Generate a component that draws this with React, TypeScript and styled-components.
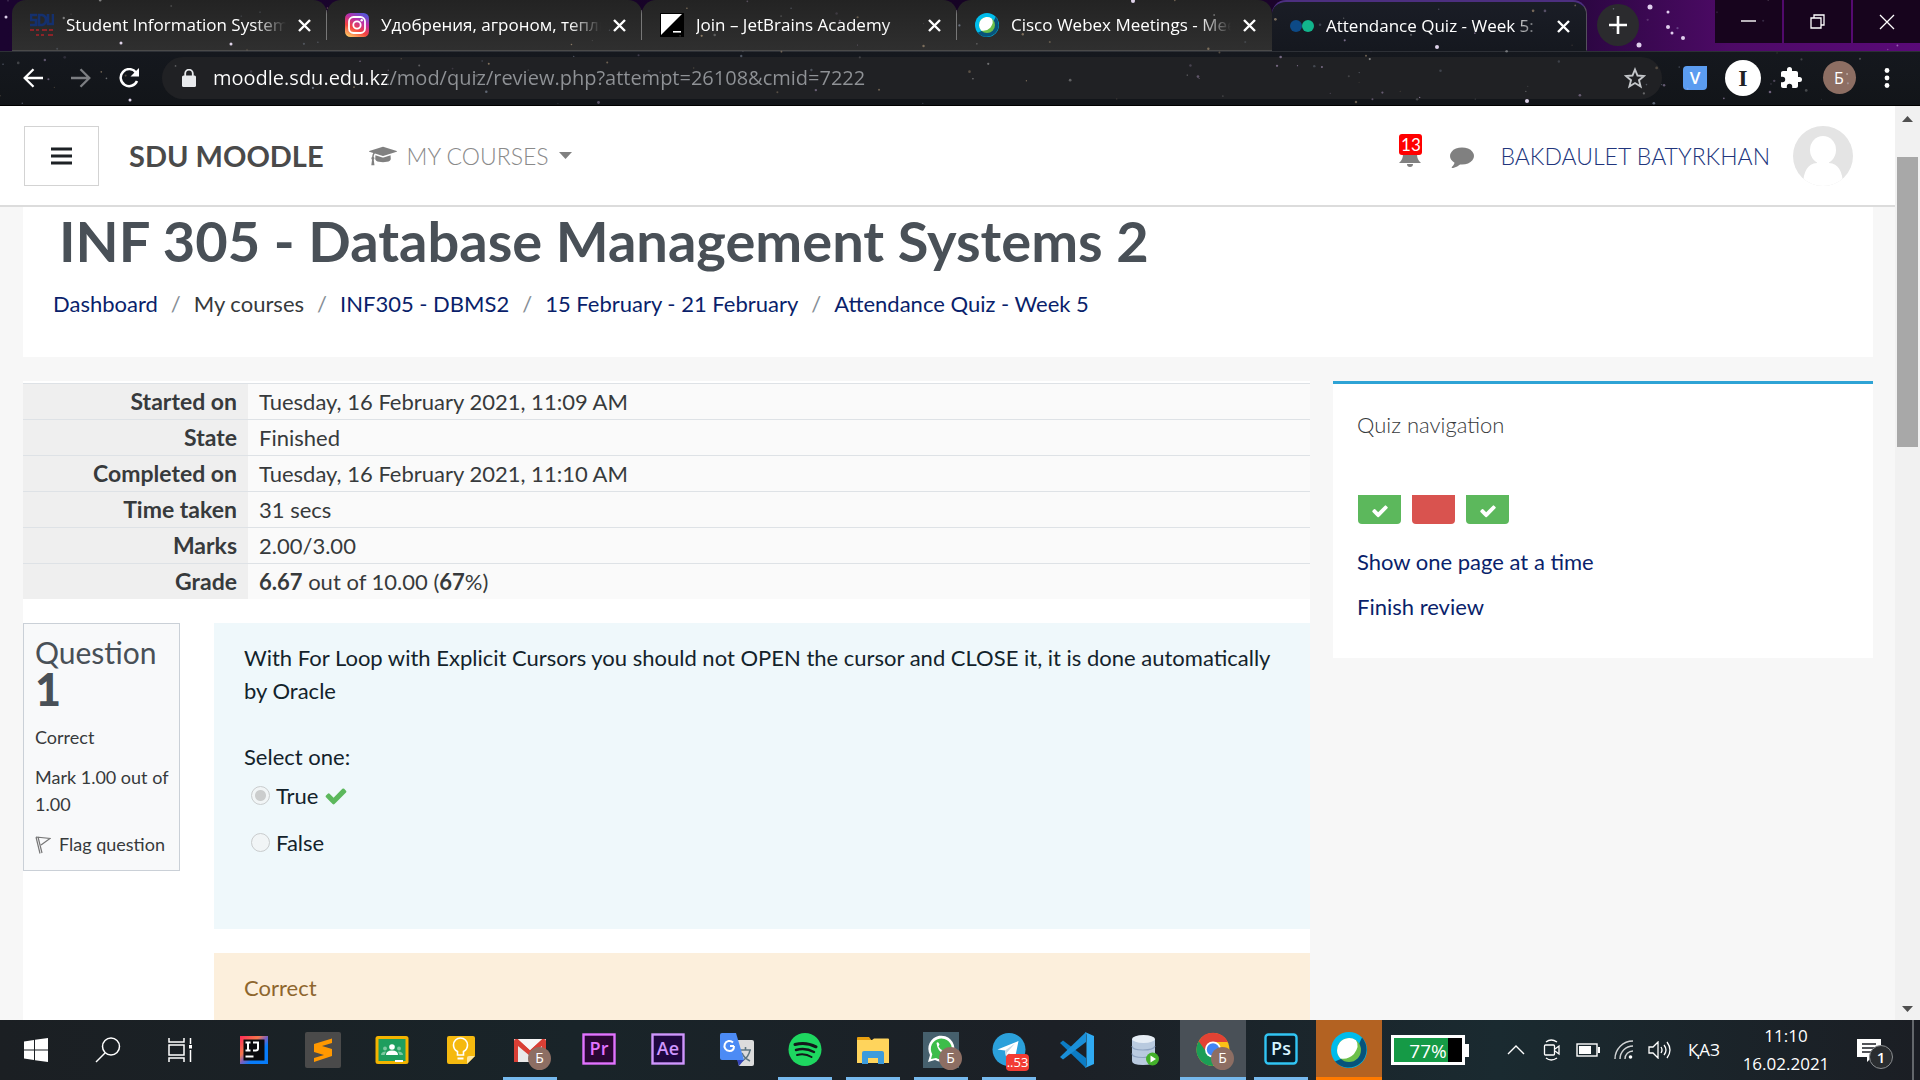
import React from "react";
import styled, { createGlobalStyle, css } from "styled-components";

const ui = `"Open Sans", "Noto Sans", sans-serif`;
const lato = `Lato, "Open Sans", sans-serif`;

const GlobalStyle = createGlobalStyle`
  *, *::before, *::after { box-sizing: border-box; }
  body { margin: 0; background: #f7f7f7; font-family: ${lato}; overflow: hidden; }
  button { margin: 0; padding: 0; border: 0; background: none; color: inherit; font: inherit; cursor: pointer; }
  a { text-decoration: none; color: #0a1f6b; }
  h1, h2, h3, p, ol, ul, fieldset, legend { margin: 0; padding: 0; border: 0; font-weight: 400; }
  ol, ul { list-style: none; }
  svg { display: block; flex: none; }
`;

const Screen = styled.div`
  display: flex;
  flex-direction: column;
  height: 100vh;
`;

/* ---------- browser frame ---------- */

const Frame = styled.header`
  position: relative;
  height: 106px;
  flex: none;
  background: linear-gradient(90deg, #1b0430 0%, #150322 60%, #2a0640 82%, #4d0a66 90%, #5a0a78 100%);
  color: #fff;
  font-family: ${ui};
  border-bottom: 1px solid #000;
`;

const Stars = styled.svg`
  position: absolute;
  inset: 0;
  width: 100%;
  height: 100%;
  pointer-events: none;
`;

const TabStrip = styled.div`
  display: flex;
  height: 51px;
  padding-left: 12px;
`;

const TabItem = styled.div<{ $active?: boolean; $divider?: boolean }>`
  display: flex;
  align-items: center;
  gap: 12px;
  flex: 0 1 315px;
  min-width: 0;
  padding: 0 16px 0 18px;
  border-radius: 14px 14px 0 0;
  background: ${(p) => (p.$active ? "linear-gradient(#1a1d26, #15181f)" : "linear-gradient(180deg, #232323, #2f2f2f)")};
  border-bottom: 1px solid ${(p) => (p.$active ? "#15181f" : "#4a4a4a")};
  ${(p) => p.$active && css`border-top: 2px solid #4c2f80; border-right: 1px solid #55505c;`}
  ${(p) => p.$divider && css`background: linear-gradient(#777, #777) right center / 1px 30px no-repeat, linear-gradient(180deg, #232323, #2f2f2f);`}
`;

const TabTitle = styled.span`
  flex: 1;
  min-width: 0;
  overflow: hidden;
  white-space: nowrap;
  font-size: 17px;
  line-height: 24px;
  mask-image: linear-gradient(90deg, #000 calc(100% - 32px), transparent);
`;

const NewTab = styled.button`
  display: grid;
  place-items: center;
  width: 42px;
  height: 42px;
  margin: 4px 0 0 10px;
  border-radius: 50%;
  background: #2b2b2e;
`;

const WindowButtons = styled.div`
  display: flex;
  gap: 2px;
  margin-left: auto;
`;

const WindowButton = styled.button`
  display: grid;
  place-items: center;
  width: 67px;
  height: 43px;
  background: #17041d;
`;

const Toolbar = styled.div`
  display: flex;
  align-items: center;
  height: 54px;
  padding: 0 9px 2px 16px;
  background: linear-gradient(#15181e, #121519);
  border-top: 1px solid #2d3036;
`;

const NavButton = styled.button`
  display: grid;
  place-items: center;
  width: 34px;
  height: 34px;
  margin-right: 14px;
`;

const Omnibox = styled.label`
  display: flex;
  align-items: center;
  flex: 1;
  height: 42px;
  margin: 0 9px 0 2px;
  padding: 0 16px 0 20px;
  border-radius: 21px;
  background: #202124;
`;

const Address = styled.input`
  flex: 1;
  min-width: 0;
  margin-left: 17px;
  padding: 0;
  border: 0;
  outline: 0;
  font: 20px/30px ${ui};
  color: #9aa0a6;
  background: linear-gradient(90deg, #fff 174px, #8f9296 174px);
  background-clip: text;
  -webkit-background-clip: text;
  -webkit-text-fill-color: transparent;
`;

const Extensions = styled.div`
  display: grid;
  grid-auto-flow: column;
  grid-auto-columns: 48px;
  place-items: center;
`;

const Round = styled.button<{ $size: number; $bg: string; $fg: string }>`
  display: grid;
  place-items: center;
  width: ${(p) => p.$size}px;
  height: ${(p) => p.$size}px;
  border-radius: 50%;
  background: ${(p) => p.$bg};
  color: ${(p) => p.$fg};
  font-size: 16px;
`;

const Serif = styled.b`
  font: 700 24px/30px "Liberation Serif", serif;
`;

const VBadge = styled.button`
  width: 24px;
  height: 24px;
  border-radius: 4px 0 4px 4px;
  background: #5b9cf0;
  font: 600 17px/24px ${ui};
  color: #fff;
`;

/* ---------- page ---------- */

const Viewport = styled.div`
  display: flex;
  flex: 1;
  min-height: 0;
`;

const Page = styled.div`
  flex: 1;
  min-width: 0;
  overflow: hidden;
  color: #373a3c;
`;

const Navbar = styled.nav`
  display: flex;
  align-items: center;
  height: 101px;
  padding: 0 42px 0 24px;
  background: #fff;
  border-bottom: 2px solid #dcdcdc;
`;

const Burger = styled.button`
  display: grid;
  place-items: center;
  width: 75px;
  height: 60px;
  border: 1px solid #d3d3d3;
  color: #1d2125;
`;

const Brand = styled.a`
  margin-left: 30px;
  font-size: 29px;
  line-height: 40px;
  font-weight: 700;
  color: #4a4a4a;
`;

const CoursesMenu = styled.button`
  display: flex;
  align-items: center;
  margin-left: 45px;
  gap: 10px;
  font-size: 23px;
  line-height: 34px;
  font-weight: 300;
  color: #8a8a8a;
`;

const UserArea = styled.div`
  display: flex;
  align-items: center;
  margin-left: auto;
`;

const BellButton = styled.button`
  position: relative;
  margin-right: 28px;
  color: #808080;
`;

const BellCount = styled.span`
  position: absolute;
  left: 1px;
  top: -10px;
  width: 23px;
  height: 21px;
  border-radius: 3px;
  background: #f00;
  color: #fff;
  font-size: 17px;
  line-height: 21px;
  text-align: center;
`;

const UserName = styled.a`
  margin: 0 23px 0 26px;
  font-size: 23px;
  line-height: 34px;
  font-weight: 300;
  color: #21357c;
`;

const PageHead = styled.section`
  margin: 0 22px 24px 23px;
  padding: 1px 30px 36px;
  background: #fff;
`;

const CourseTitle = styled.h1`
  padding-left: 6px;
  font-size: 56px;
  line-height: 66px;
  font-weight: 700;
  color: #495057;
`;

const Crumbs = styled.ol`
  display: flex;
  margin-top: 13px;
  font-size: 22px;
  line-height: 34px;
`;

const Crumb = styled.li`
  & + &::before {
    content: "/";
    padding: 0 13px;
    color: #868e96;
  }
`;

const Columns = styled.div`
  display: flex;
  align-items: flex-start;
  gap: 23px;
  margin: 0 22px 0 23px;
`;

const Attempt = styled.main`
  flex: 1;
  min-width: 0;
  min-height: 640px;
  padding-top: 2px;
  background: #fff;
`;

const Summary = styled.table`
  width: 100%;
  border-collapse: collapse;
  font-size: 22px;
  line-height: 35px;

  th, td {
    padding: 0 11px;
    border-top: 1px solid #dee2e6;
  }
  th {
    width: 225px;
    text-align: right;
    font-size: 23px;
    font-weight: 700;
    background: #efefef;
  }
  td { background: #fafafa; }
`;

const Question = styled.section`
  display: flex;
  align-items: flex-start;
  gap: 34px;
  margin-top: 24px;
`;

const Info = styled.aside`
  display: flex;
  flex-direction: column;
  gap: 13px;
  width: 157px;
  flex: none;
  padding: 10px 0 12px 11px;
  border: 1px solid #cad0d7;
  background: #f8f9fa;
  font-size: 18px;
  line-height: 27px;
`;

const QuestionNumber = styled.h3`
  margin-bottom: 3px;
  font-size: 30px;
  line-height: 36px;
  color: #495057;

  b {
    display: block;
    font-size: 45px;
    line-height: 38px;
    font-weight: 900;
  }
`;

const FlagLink = styled.a`
  display: flex;
  align-items: center;
  gap: 8px;
  color: #373a3c;
`;

const Body = styled.div`
  flex: 1;
  min-width: 0;
  font-size: 22px;
  line-height: 33px;
`;

const Formulation = styled.div`
  padding: 18px 24px 56px 30px;
  background: #eff8fb;
  color: #13232b;
`;

const Choices = styled.fieldset`
  margin-top: 33px;
`;

const Choice = styled.label`
  display: flex;
  align-items: center;
  margin: 6px 0 14px 7px;
`;

const Radio = styled.input`
  appearance: none;
  width: 19px;
  height: 19px;
  margin: 0 6px 0 0;
  border: 1px solid #c9cccd;
  border-radius: 50%;
  background: #f1f5f6;

  &:checked {
    background: radial-gradient(circle, #cbcdcd 0 5px, #f1f5f6 6px);
  }
`;

const Outcome = styled.div`
  margin-top: 24px;
  padding: 18px 30px;
  background: #fcefdc;
  color: #8e662e;
`;

const NavBlock = styled.aside`
  width: 540px;
  flex: none;
  padding: 24px 24px 35px;
  border-top: 3px solid #2ea3d5;
  background: #fff;
  font-size: 22px;
  line-height: 33px;
`;

const BlockTitle = styled.h2`
  font-size: 22px;
  font-weight: 300;
`;

const Cells = styled.div`
  display: flex;
  gap: 11px;
  margin: 54px 0 21px 1px;
`;

const Cell = styled.a<{ $tone: "ok" | "bad" }>`
  display: grid;
  place-items: center;
  width: 43px;
  height: 29px;
  padding-top: 3px;
  border-radius: 0 0 4px 4px;
  color: #fff;
  background: ${(p) => (p.$tone === "ok" ? "#5cb85c" : "#d9534f")};
`;

const BlockLink = styled.a`
  display: block;
  margin-top: 12px;
`;

const ScrollTrack = styled.div`
  display: flex;
  flex-direction: column;
  align-items: center;
  width: 25px;
  flex: none;
  padding: 10px 0 8px;
  background: #f1f1f1;
`;

const Thumb = styled.div`
  width: 21px;
  height: 290px;
  margin: 35px 0 auto;
  background: #a8a8a8;
`;

/* ---------- taskbar ---------- */

const Taskbar = styled.footer`
  display: flex;
  align-items: stretch;
  height: 60px;
  flex: none;
  background: linear-gradient(90deg, #1b1f23 0%, #192429 30%, #1c2026 55%, #1a2a30 78%, #1b1e24 100%);
  color: #fff;
  font-family: ${ui};
`;

const SystemButton = styled.button`
  display: grid;
  place-items: center;
  width: 72px;
`;

const TaskGroup = styled.div<{ $gap: number; $lead: number }>`
  display: flex;
  gap: ${(p) => p.$gap}px;
  margin-left: ${(p) => p.$lead}px;
`;

const TaskButton = styled.button<{ $state?: "open" | "active" | "alert" }>`
  display: grid;
  place-items: center;
  width: 66px;
  ${(p) => p.$state === "open" && css`background: linear-gradient(#76b9ed, #76b9ed) center bottom / 54px 3px no-repeat;`}
  ${(p) => p.$state === "active" && css`background: #495057; box-shadow: inset 0 -3px #76b9ed;`}
  ${(p) => p.$state === "alert" && css`background: #b36222; box-shadow: inset 0 -3px #ff7a00;`}
`;

const IconBox = styled.span`
  position: relative;
  display: block;
  width: 36px;
  height: 36px;
`;

const ProfileDot = styled.span`
  position: absolute;
  left: 16px;
  top: 15px;
  width: 23px;
  height: 23px;
  border-radius: 50%;
  background: #8d6e63;
  font-size: 14px;
  line-height: 22px;
  text-align: center;
`;

const CountDot = styled.span`
  position: absolute;
  left: 15px;
  top: 22px;
  width: 23px;
  height: 17px;
  border-radius: 4px;
  background: #f23c34;
  font-size: 13px;
  line-height: 17px;
  text-align: center;
`;

const Battery = styled.div`
  display: flex;
  align-items: center;
  align-self: center;
  margin-left: 9px;

  &::after {
    content: "";
    width: 4px;
    height: 13px;
    background: #fff;
  }
`;

const BatteryLevel = styled.div`
  width: 74px;
  height: 30px;
  border: 3px solid #fff;
  background: linear-gradient(90deg, #159a46 54px, #000 54px);
  font-size: 19px;
  line-height: 26px;
  text-align: center;
`;

const Tray = styled.div`
  display: flex;
  align-items: center;
  margin-left: auto;
  font-size: 17px;
  line-height: 28px;
`;

const TrayButton = styled.button`
  display: grid;
  place-items: center;
  width: 36px;
  height: 60px;
`;

const Language = styled.button`
  width: 34px;
  margin: 0 21px 0 9px;
`;

const Clock = styled.button`
  width: 88px;
  line-height: 28px;
`;

const Notices = styled.button`
  position: relative;
  width: 36px;
  height: 36px;
  margin: 0 20px 0 26px;
`;

const NoticeCount = styled.span`
  position: absolute;
  left: 13px;
  top: 13px;
  width: 24px;
  height: 24px;
  border: 1px solid #8a8d90;
  border-radius: 50%;
  background: #2a2d30;
  font-size: 15px;
  font-weight: 600;
  line-height: 22px;
  text-align: center;
`;

const ShowDesktop = styled.button`
  width: 8px;
  height: 60px;
  border-left: 2px solid #63676b;
`;

/* ---------- drawings ---------- */

const starData = (() => {
  let s = 7;
  const next = () => (s = (s * 16807) % 2147483647) / 2147483647;
  return Array.from({ length: 160 }, () => ({
    x: next() * 1920,
    y: next() * 104,
    r: 0.5 + next() * 0.9,
    o: 0.12 + next() * 0.35,
    c: ["#fff", "#cfe0ff", "#ffd9a8", "#e8c8ff"][Math.floor(next() * 4)],
  }));
})();

const bigStars = [
  [1650, 7, 2.5], [1668, 27, 2], [1639, 45, 2.5], [1683, 38, 2], [1668, 12, 1.5], [1672, 33, 1.5],
  [1437, 47, 2], [1527, 101, 2], [1133, 1, 2], [121, 43, 1.5], [231, 44, 1.5], [6, 17, 1.5], [130, 100, 1.5],
];

const Starfield = () => (
  <Stars aria-hidden viewBox="0 0 1920 106" preserveAspectRatio="xMinYMin slice">
    {starData.map((d, i) => <circle key={i} cx={d.x} cy={d.y} r={d.r} fill={d.c} opacity={d.o} />)}
    {bigStars.map(([x, y, r], i) => <circle key={i} cx={x} cy={y} r={r} fill="#f3e6ff" opacity=".9" />)}
  </Stars>
);

const Cross = () => (
  <svg width="13" height="13" viewBox="0 0 13 13"><path d="M1 1l11 11M12 1L1 12" stroke="#fff" strokeWidth="2.4" /></svg>
);

const Check = ({ size, color = "currentColor" }: { size: number; color?: string }) => (
  <svg width={size} height={size} viewBox="0 0 1792 1792" fill={color}><path d="M1671 566q0 40-28 68l-724 724-136 136q-28 28-68 28t-68-28l-136-136-362-362q-28-28-28-68t28-68l136-136q28-28 68-28t68 28l294 295 656-657q28-28 68-28t68 28l136 136q28 28 28 68z" /></svg>
);

const Webex = ({ size }: { size: number }) => (
  <svg width={size} height={size} viewBox="0 0 36 36">
    <circle cx="18" cy="18" r="18" fill="#00bceb" />
    <path d="M31 5.500A18 18 0 1 1 4 29.500L12 26Q26 30 28 12Z" fill="#07537b" />
    <circle cx="18" cy="18" r="12" fill="#6cc04a" />
    <path d="M25 8.300Q29 14 23 22Q17 28 9.500 26.500A12 12 0 0 1 25 8.300Z" fill="#fff" />
  </svg>
);

const favicons = {
  sdu: (
    <svg width="24" height="24" viewBox="0 0 24 24">
      <g fill="none" stroke="#14306e" strokeWidth="2.600"><path d="M7 2H1v5h5v5H0M9 2v10h3q4-1 4-5t-4-5zM18 1v10h5V1" /></g>
      <path d="M0 17h4M6 17h3M12 17h5M19 17h4M6 22h3M11 22h3M18 22h5" stroke="#8c2328" strokeWidth="2" />
    </svg>
  ),
  instagram: (
    <svg width="24" height="24" viewBox="0 0 24 24">
      <defs><linearGradient id="ig" x1="0.2" y1="1" x2="0.7" y2="0"><stop offset="0" stopColor="#fec564" /><stop offset=".35" stopColor="#f5433f" /><stop offset=".7" stopColor="#b92fa8" /><stop offset="1" stopColor="#5a55d8" /></linearGradient></defs>
      <rect width="24" height="24" rx="5.500" fill="url(#ig)" />
      <g fill="none" stroke="#fff" strokeWidth="1.800"><rect x="4" y="4" width="16" height="16" rx="4.500" /><circle cx="12" cy="12" r="3.700" /></g>
      <circle cx="16.700" cy="7.300" r="1.200" fill="#fff" />
    </svg>
  ),
  jetbrains: (
    <svg width="24" height="24" viewBox="0 0 24 24"><path d="M0 0h24v24H0z" /><path d="M1 1h21L1 22z" fill="#fff" /><path d="M13 18h8v1.600h-8z" fill="#fff" /></svg>
  ),
  webex: <Webex size={24} />,
  moodle: (
    <svg width="24" height="24" viewBox="0 0 24 24"><circle cx="6" cy="12" r="6" fill="#0d4a86" /><circle cx="18" cy="12" r="6" fill="#12b48c" /></svg>
  ),
};

const Adobe = ({ label, line, fill, ink = line, radius = 0 }: { label: string; line: string; fill: string; ink?: string; radius?: number }) => (
  <svg width="36" height="36" viewBox="0 0 36 36">
    <rect x="2.500" y="2.500" width="31" height="29" rx={radius} fill={fill} stroke={line} strokeWidth="2.400" />
    <text x="18" y="23" textAnchor="middle" fontFamily="Open Sans, sans-serif" fontWeight="600" fontSize="18" fill={ink}>{label}</text>
  </svg>
);

type Task = { name: string; icon: React.ReactNode; state?: "open" | "active" | "alert"; profile?: boolean; count?: string };

const launchers: Task[] = [
  { name: "IntelliJ IDEA", icon: (
    <svg viewBox="0 0 36 36"><defs><linearGradient id="ij" x1="0" y1="0" x2="1" y2="1"><stop offset="0" stopColor="#fe2857" /><stop offset=".35" stopColor="#f5784c" /><stop offset=".5" stopColor="#7b5fc0" /><stop offset=".65" stopColor="#087cfa" /><stop offset="1" stopColor="#087cfa" /></linearGradient></defs>
      <rect x="4" y="4" width="28" height="28" fill="url(#ij)" /><rect x="7.500" y="7.500" width="21" height="21" fill="#0b0b0d" />
      <path d="M9.500 10.500h5M12 10.500v8M9.500 18.500h5M17 10.500h5v6q0 2-2.200 2H17" fill="none" stroke="#fff" strokeWidth="2" /><path d="M9.500 24.500h8" stroke="#fff" strokeWidth="2" /></svg>
  ) },
  { name: "Sublime Text", icon: (
    <svg viewBox="0 0 36 36"><rect width="36" height="36" rx="2" fill="#4a4a4a" /><path d="M27 6.500L9 12v8l10 3L9 26v4l18-6v-7l-10-3 10-3z" fill="#ff9800" /></svg>
  ) },
  { name: "Google Classroom", icon: (
    <svg viewBox="0 0 36 36"><rect x="1.500" y="4" width="33" height="28" rx="2.500" fill="#f4b400" /><rect x="4.500" y="7" width="27" height="22" fill="#1e9e5e" />
      <circle cx="18" cy="15" r="2.800" fill="#fff" /><path d="M12 23q0-4.500 6-4.500t6 4.500z" fill="#fff" /><g fill="#7cc9a0"><circle cx="11" cy="16.500" r="1.900" /><circle cx="25" cy="16.500" r="1.900" /><path d="M7 23q0-3.500 5-3.500l-1.500 3.500zM29 23q0-3.500-5-3.500l1.500 3.500z" /></g><path d="M21 28h8v2h-8z" fill="#fff" /></svg>
  ) },
  { name: "Google Keep", icon: (
    <svg viewBox="0 0 36 36"><path d="M6 4h24q2 0 2 2v18l-8 8H6q-2 0-2-2V6q0-2 2-2z" fill="#f5b90f" /><path d="M32 24h-6q-2 0-2 2v6z" fill="#ffe7a0" />
      <path d="M14.500 23v-3.500q-4-2-4-6.500a7 7 0 0 1 14 0q0 4.500-4 6.500V23z" fill="none" stroke="#fff" strokeWidth="1.600" /><path d="M14.500 26.500h6" stroke="#fff" strokeWidth="2" /></svg>
  ) },
  { name: "Gmail", state: "open", profile: true, icon: (
    <svg viewBox="0 0 36 36"><path d="M2 7h32v23H2z" fill="#e9e9e9" /><path d="M2 9q0-2 2-2h2l12 11L30 7h2q2 0 2 2v21h-4V14L18 24 6 14v16H2z" fill="#d93f35" /><path d="M6 7h24L18 18z" fill="#f7f7f7" /></svg>
  ) },
  { name: "Premiere Pro", icon: <Adobe label="Pr" line="#e273ff" fill="#2a0634" /> },
  { name: "After Effects", icon: <Adobe label="Ae" line="#cf96fd" fill="#1f0740" /> },
  { name: "Google Translate", icon: (
    <svg viewBox="0 0 36 36"><path d="M14 8h19q2 0 2 2v22q0 2-2 2H20z" fill="#dcdcdc" /><path d="M21 18h11M26.500 15v3M23 29q7-4 8-11M23 21q2 5 8 8" fill="none" stroke="#5d7580" strokeWidth="1.600" /><path d="M18 28h7l-5 6z" fill="#3545b8" /><path d="M3 1h14l8 27H3q-2 0-2-2V3q0-2 2-2z" fill="#4c8bf5" />
      <path d="M15 14h-4M15 14q0 5-4.500 5a5 5 0 1 1 3.500-8.500" fill="none" stroke="#fff" strokeWidth="2" /></svg>
  ) },
];

const running: Task[] = [
  { name: "Spotify", state: "open", icon: (
    <svg viewBox="0 0 36 36"><circle cx="18" cy="17.500" r="16.500" fill="#1ed760" /><g fill="none" stroke="#13181b" strokeLinecap="round"><path d="M8 12.500q11-3 21 2.300" strokeWidth="3" /><path d="M9 18q9.500-2.500 18 2" strokeWidth="2.500" /><path d="M10 23q8-2 14.500 2" strokeWidth="2" /></g></svg>
  ) },
  { name: "File Explorer", state: "open", icon: (
    <svg viewBox="0 0 36 36"><path d="M2 6q0-1 1-1h11l3 4h-15z" fill="#e8a010" /><path d="M2 8h15l2-1.500h14q1 0 1 1V31H2z" fill="#ffd45c" /><path d="M7 32V21q0-2 2-2h18q2 0 2 2v11h-6v-6H13v6z" fill="#3c9bdc" /></svg>
  ) },
  { name: "WhatsApp", state: "open", profile: true, icon: (
    <svg viewBox="0 0 36 36"><path d="M0 0h36v36H0z" fill="#46606d" /><path d="M5 30l2-7A13 13 0 1 1 12 28z" fill="#fff" /><path d="M8 27l1.300-4.700A10.500 10.500 0 1 1 13 26z" fill="#3dbd4a" /><path d="M13.500 11q1.500-2 3 1.500l-1 2q2 3.500 5 4.500l1.500-2 3.500 2q0 3-4 3-7-2-8-11z" fill="#fff" /></svg>
  ) },
  { name: "Telegram", state: "open", count: "..53", icon: (
    <svg viewBox="0 0 36 36"><circle cx="18" cy="17.500" r="16.500" fill="#2ba0da" /><path d="M6.500 17.500L27.500 9l-3.500 17-6-4.500-3 3-1-6z" fill="#fff" /><path d="M14 18.500l10-7-8 9-1 4z" fill="#c5d8e6" /></svg>
  ) },
  { name: "Visual Studio Code", icon: (
    <svg viewBox="0 0 36 36"><path d="M1 11l3-2.500 23 17.500v10z" fill="#0c7cc4" /><path d="M1 25l3 2.500L27 10V0z" fill="#1a8fd8" /><path d="M26 0l9 4v28l-9 4q1.500-1 1.500-3V3q0-2-1.500-3z" fill="#2faaf2" /></svg>
  ) },
  { name: "Database", icon: (
    <svg viewBox="0 0 36 36"><path d="M5 7v22q0 4 11 4t12-4V7z" fill="#b9cadf" /><ellipse cx="16.500" cy="7" rx="11.500" ry="4" fill="#e6edf5" /><path d="M5 14q0 4 11 4t12-4M5 21.500q0 4 11 4t12-4" fill="none" stroke="#8ea3c0" strokeWidth="1.200" /><circle cx="25.500" cy="27" r="6.500" fill="#43b02a" /><path d="M23.500 23.500l5.500 3.500-5.500 3.500z" fill="#fff" /></svg>
  ) },
  { name: "Google Chrome", state: "active", profile: true, icon: (
    <svg viewBox="0 0 36 36"><circle cx="18" cy="17.500" r="16.500" fill="#fbc116" /><path d="M18 17.500L3.700 9.200A16.500 16.500 0 0 0 18 34l8-12z" fill="#1b9e56" /><path d="M3.700 9.200A16.500 16.500 0 0 1 32.800 10H18l-8 8z" fill="#e24234" /><circle cx="18" cy="17.500" r="8" fill="#fff" /><circle cx="18" cy="17.500" r="6.200" fill="#4285f4" /></svg>
  ) },
  { name: "Photoshop", state: "open", icon: <Adobe label="Ps" line="#31c5f4" fill="#081c28" ink="#d5f4ff" radius={3} /> },
  { name: "Webex", state: "alert", icon: <Webex size={36} /> },
];

const tabs = [
  { title: "Student Information System", icon: favicons.sdu },
  { title: "Удобрения, агроном, теплицы", icon: favicons.instagram },
  { title: "Join – JetBrains Academy", icon: favicons.jetbrains },
  { title: "Cisco Webex Meetings - Meet", icon: favicons.webex },
  { title: "Attendance Quiz - Week 5:", icon: favicons.moodle },
];

const summary: [string, React.ReactNode][] = [
  ["Started on", "Tuesday, 16 February 2021, 11:09 AM"],
  ["State", "Finished"],
  ["Completed on", "Tuesday, 16 February 2021, 11:10 AM"],
  ["Time taken", "31 secs"],
  ["Marks", "2.00/3.00"],
  ["Grade", <><b>6.67</b> out of 10.00 (<b>67</b>%)</>],
];

const Browser = () => (
  <Frame>
    <TabStrip>
      {tabs.map((t, i) => (
        <TabItem key={t.title} $active={i === 4} $divider={i < 3}>
          {t.icon}
          <TabTitle>{t.title}</TabTitle>
          <button aria-label="Close tab"><Cross /></button>
        </TabItem>
      ))}
      <NewTab aria-label="New tab"><svg width="18" height="18" viewBox="0 0 18 18"><path d="M9 0v18M0 9h18" stroke="#fff" strokeWidth="2.600" /></svg></NewTab>
      <WindowButtons>
        <WindowButton aria-label="Minimize"><svg width="15" height="15"><path d="M0 7h15" stroke="#fff" strokeWidth="1.400" /></svg></WindowButton>
        <WindowButton aria-label="Restore"><svg width="15" height="15" fill="none" stroke="#fff" strokeWidth="1.300"><path d="M1 4h10v10H1zM4 4V1h10v10h-3" /></svg></WindowButton>
        <WindowButton aria-label="Close"><svg width="16" height="16"><path d="M1 1l14 14M15 1L1 15" stroke="#fff" strokeWidth="1.300" /></svg></WindowButton>
      </WindowButtons>
    </TabStrip>
    <Toolbar>
      <NavButton aria-label="Back"><svg width="20" height="20" fill="none" stroke="#fff" strokeWidth="2.300"><path d="M20 10H2M10.500 1.200L1.700 10l8.800 8.800" /></svg></NavButton>
      <NavButton aria-label="Forward"><svg width="20" height="20" fill="none" stroke="#7c7e82" strokeWidth="2.300"><path d="M0 10h18M9.500 1.200l8.800 8.800-8.800 8.800" /></svg></NavButton>
      <NavButton aria-label="Reload"><svg width="22" height="20" fill="none" stroke="#fff" strokeWidth="2.500"><path d="M18 4.500A8.500 8.500 0 1 0 19 13" /><path d="M21 0v8.500h-8.500z" fill="#fff" stroke="none" /></svg></NavButton>
      <Omnibox>
        <svg width="14" height="18" viewBox="0 0 14 18"><rect y="6.500" width="14" height="11.500" rx="1.500" fill="#e8eaed" /><path d="M3.200 8V4.500a3.800 3.800 0 0 1 7.600 0V8" fill="none" stroke="#e8eaed" strokeWidth="1.800" /></svg>
        <Address aria-label="Address" readOnly value="moodle.sdu.edu.kz/mod/quiz/review.php?attempt=26108&cmid=7222" />
        <button aria-label="Bookmark"><svg width="22" height="22" viewBox="0 0 22 22"><path d="M11 2.500l2.500 6 6.500.5-5 4.200 1.600 6.300L11 16l-5.600 3.500L7 13.200 2 9l6.500-.5z" fill="none" stroke="#c4c7ca" strokeWidth="1.900" /></svg></button>
      </Omnibox>
      <Extensions>
        <VBadge>V</VBadge>
        <Round $size={36} $bg="#fff" $fg="#202124"><Serif>I</Serif></Round>
        <button aria-label="Extensions"><svg width="22" height="22" viewBox="1 1 22 22" fill="#fff"><path d="M20.500 11H19V7c0-1.100-.9-2-2-2h-4V3.500a2.500 2.500 0 0 0-5 0V5H4c-1.100 0-2 .9-2 2v3.800h1.500a2.700 2.700 0 0 1 0 5.400H2V20c0 1.100.9 2 2 2h3.800v-1.500a2.700 2.700 0 0 1 5.400 0V22H17c1.100 0 2-.9 2-2v-4h1.500a2.500 2.500 0 0 0 0-5z" /></svg></button>
        <Round $size={33} $bg="#8d6e63" $fg="#fff">Б</Round>
        <button aria-label="Menu"><svg width="22" height="20" fill="#fff"><circle cx="11" cy="2.500" r="2.400" /><circle cx="11" cy="10" r="2.400" /><circle cx="11" cy="17.500" r="2.400" /></svg></button>
      </Extensions>
    </Toolbar>
    <Starfield />
  </Frame>
);

const Moodle = () => (
  <Page>
    <Navbar>
      <Burger aria-label="Side panel"><svg width="21" height="18"><path d="M0 2h21M0 9h21M0 16h21" stroke="currentColor" strokeWidth="3" /></svg></Burger>
      <Brand href="#home">SDU MOODLE</Brand>
      <CoursesMenu>
        <svg width="28" height="22" viewBox="0 0 2304 1792" fill="#808080"><path d="M1774 836l18 316q4 69-82 128t-235 93.500-323 34.500-323-34.500-235-93.500-82-128l18-316 574 181q22 7 48 7t48-7zm530-324q0 23-22 31l-1120 352q-4 1-10 1t-10-1l-652-206q-43 34-71 111.500t-34 178.500q63 36 63 109 0 69-58 107l58 433q2 14-8 25-9 11-24 11h-192q-15 0-24-11-10-11-8-25l58-433q-58-38-58-107 0-73 65-111 11-207 98-330l-333-104q-22-8-22-31t22-31l1120-352q4-1 10-1t10 1l1120 352q22 8 22 31z" /></svg>
        MY COURSES
        <svg width="13" height="7"><path d="M0 0h13L6.500 7z" fill="#808080" /></svg>
      </CoursesMenu>
      <UserArea>
        <BellButton aria-label="Notifications">
          <svg width="24" height="24" viewBox="0 0 24 24" fill="currentColor"><path d="M12 2q7 1 7 8 0 6 4 9H1q4-3 4-9 0-7 7-8zM9 20h6q0 3-3 3t-3-3z" /></svg>
          <BellCount>13</BellCount>
        </BellButton>
        <button aria-label="Messages"><svg width="24" height="24" viewBox="0 0 1792 1792" fill="#808080"><path d="M1792 896q0 174-120 321.500t-326 233-450 85.500q-70 0-145-8-198 175-460 242-49 14-114 22-17 2-30.500-9t-17.500-29v-1q-3-4-.5-12t2-10 4.500-9.500l6-9 7-8.500 8-9q7-8 31-34.500t34.500-38 31-39.500 32.500-51 27-59 26-76q-157-89-247.500-220t-90.500-281q0-174 120-321.500t326-233 450-85.500 450 85.500 326 233 120 321.500z" /></svg></button>
        <UserName href="#profile">BAKDAULET BATYRKHAN</UserName>
        <svg width="60" height="60" viewBox="0 0 60 60"><defs><clipPath id="av"><circle cx="30" cy="30" r="30" /></clipPath></defs><g clipPath="url(#av)"><path d="M0 0h60v60H0z" fill="#e4e4e4" /><ellipse cx="30" cy="24" rx="13" ry="14" fill="#fff" /><path d="M10 60q0-22 14-23V30h12v7q14 1 14 23z" fill="#fff" /></g></svg>
      </UserArea>
    </Navbar>

    <PageHead>
      <CourseTitle>INF 305 - Database Management Systems 2</CourseTitle>
      <Crumbs>
        <Crumb><a href="#dashboard">Dashboard</a></Crumb>
        <Crumb>My courses</Crumb>
        <Crumb><a href="#course">INF305 - DBMS2</a></Crumb>
        <Crumb><a href="#week">15 February - 21 February</a></Crumb>
        <Crumb><a href="#quiz">Attendance Quiz - Week 5</a></Crumb>
      </Crumbs>
    </PageHead>

    <Columns>
      <Attempt>
        <Summary>
          <tbody>
            {summary.map(([k, v]) => <tr key={k}><th scope="row">{k}</th><td>{v}</td></tr>)}
          </tbody>
        </Summary>
        <Question>
          <Info>
            <QuestionNumber>Question <b>1</b></QuestionNumber>
            <p>Correct</p>
            <p>Mark 1.00 out of 1.00</p>
            <FlagLink href="#flag">
              <svg width="16" height="18" viewBox="0 0 16 18" fill="none" stroke="#777" strokeWidth="1.200"><path d="M1 1l4 16.500M3 1l4 16M1 1l14 1.500-9 6.500" /></svg>
              Flag question
            </FlagLink>
          </Info>
          <Body>
            <Formulation>
              <p>With For Loop with Explicit Cursors you should not OPEN the cursor and CLOSE it, it is done automatically by Oracle</p>
              <Choices>
                <legend>Select one:</legend>
                <Choice><Radio type="radio" name="answer" disabled defaultChecked />True&nbsp;<Check size={24} color="#5cb85c" /></Choice>
                <Choice><Radio type="radio" name="answer" disabled />False</Choice>
              </Choices>
            </Formulation>
            <Outcome>Correct</Outcome>
          </Body>
        </Question>
      </Attempt>

      <NavBlock>
        <BlockTitle>Quiz navigation</BlockTitle>
        <Cells>
          <Cell href="#q1" $tone="ok" aria-label="Question 1"><Check size={18} /></Cell>
          <Cell href="#q2" $tone="bad" aria-label="Question 2" />
          <Cell href="#q3" $tone="ok" aria-label="Question 3"><Check size={18} /></Cell>
        </Cells>
        <BlockLink href="#page">Show one page at a time</BlockLink>
        <BlockLink href="#finish">Finish review</BlockLink>
      </NavBlock>
    </Columns>
  </Page>
);

const Tasks = ({ items }: { items: Task[] }) => (
  <>
    {items.map((t) => (
      <TaskButton key={t.name} aria-label={t.name} $state={t.state}>
        <IconBox>
          {t.icon}
          {t.profile && <ProfileDot>Б</ProfileDot>}
          {t.count && <CountDot>{t.count}</CountDot>}
        </IconBox>
      </TaskButton>
    ))}
  </>
);

const WindowsTaskbar = () => (
  <Taskbar>
    <SystemButton aria-label="Start"><svg width="24" height="24" fill="#fff"><path d="M0 3.500l10-1.500v9.500H0zM11 1.800L24 0v11.500H11zM0 12.500h10V22L0 20.500zM11 12.500h13V24l-13-1.800z" /></svg></SystemButton>
    <SystemButton aria-label="Search"><svg width="26" height="26" fill="none" stroke="#fff" strokeWidth="1.500"><circle cx="16" cy="9.500" r="8.500" /><path d="M10 16L1 25" /></svg></SystemButton>
    <SystemButton aria-label="Task view"><svg width="24" height="24" fill="none" stroke="#fff" strokeWidth="1.500"><path d="M1 0v4h15V0M1 7h15v10H1zM1 24v-4h15v4M22.500 0v6M22.500 12v12" /><path d="M22.500 7v3.500" strokeWidth="3" /></svg></SystemButton>
    <TaskGroup $gap={3} $lead={5}><Tasks items={launchers} /></TaskGroup>
    <TaskGroup $gap={2} $lead={2}><Tasks items={running} /></TaskGroup>
    <Battery><BatteryLevel>77%</BatteryLevel></Battery>
    <Tray>
      <TrayButton aria-label="Hidden icons"><svg width="18" height="10" fill="none" stroke="#fff" strokeWidth="1.400"><path d="M1 9l8-8 8 8" /></svg></TrayButton>
      <TrayButton aria-label="Camera"><svg width="18" height="22" fill="none" stroke="#fff" strokeWidth="1.300"><rect x="1.500" y="6" width="10" height="10" rx="1" /><path d="M12 10l4-3v8l-4-3M3 3q5-4 11 0M3 19q5 4 11 0" /></svg></TrayButton>
      <TrayButton aria-label="Battery"><svg width="24" height="14"><rect x="1" y="1" width="20" height="12" fill="none" stroke="#fff" strokeWidth="1.400" /><path d="M3 3h12v8H3zM22 4h2v6h-2z" fill="#fff" /></svg></TrayButton>
      <TrayButton aria-label="Network"><svg width="20" height="20" fill="none" stroke="#fff" strokeWidth="1.400"><path d="M1 19A18 18 0 0 1 19 1M6 19A13 13 0 0 1 19 6M11 19A8 8 0 0 1 19 11" opacity=".8" /><circle cx="16.500" cy="17" r="1.800" fill="#fff" stroke="none" /></svg></TrayButton>
      <TrayButton aria-label="Volume"><svg width="24" height="18" fill="none" stroke="#fff" strokeWidth="1.300"><path d="M1 6h4l5-5v16l-5-5H1zM13 6q2 3 0 6M16 4q4 5 0 10M19 1q6 8 0 16" /></svg></TrayButton>
      <Language>ҚАЗ</Language>
      <Clock>11:10<br />16.02.2021</Clock>
      <Notices aria-label="Notifications">
        <svg width="26" height="26" viewBox="0 0 26 26"><path d="M1 2h24v18h-9l-5 5v-5H1z" fill="#fff" /><path d="M6 7h14M6 11h14M6 15h9" stroke="#1b1e24" strokeWidth="1.300" /></svg>
        <NoticeCount>1</NoticeCount>
      </Notices>
      <ShowDesktop aria-label="Show desktop" />
    </Tray>
  </Taskbar>
);

export default function App() {
  return (
    <Screen>
      <GlobalStyle />
      <Browser />
      <Viewport>
        <Moodle />
        <ScrollTrack aria-hidden>
          <svg width="11" height="6"><path d="M0 6h11L5.500 0z" fill="#505050" /></svg>
          <Thumb />
          <svg width="11" height="6"><path d="M0 0h11L5.500 6z" fill="#505050" /></svg>
        </ScrollTrack>
      </Viewport>
      <WindowsTaskbar />
    </Screen>
  );
}
